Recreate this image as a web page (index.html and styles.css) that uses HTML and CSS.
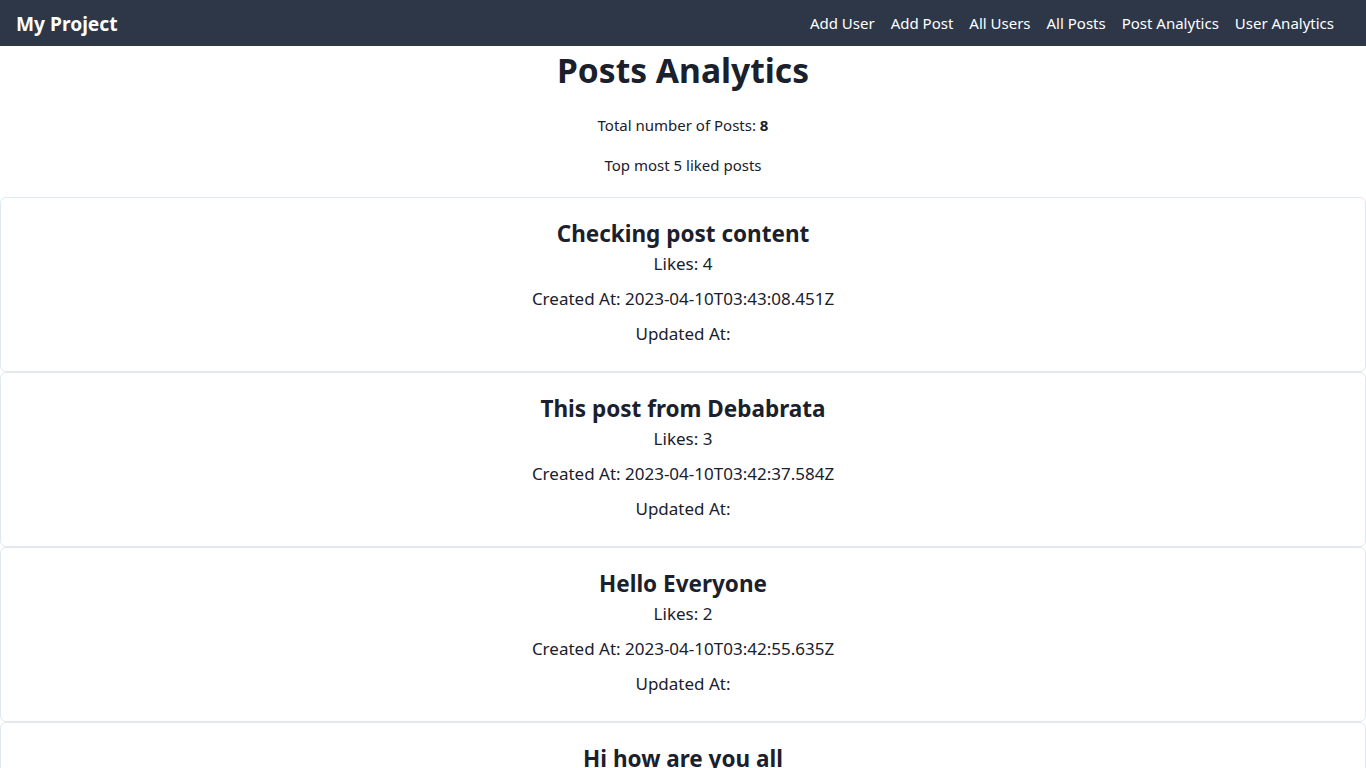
FILE: index.html
```html
<!DOCTYPE html>
<html lang="en">
<head>
<meta charset="utf-8">
<title>Posts Analytics</title>
<link rel="stylesheet" href="styles.css">
</head>
<body>
<nav class="navbar">
  <a class="brand" href="#">My Project</a>
  <ul class="nav-links">
    <li><a href="#">Add User</a></li>
    <li><a href="#">Add Post</a></li>
    <li><a href="#">All Users</a></li>
    <li><a href="#">All Posts</a></li>
    <li><a href="#">Post Analytics</a></li>
    <li><a href="#">User Analytics</a></li>
  </ul>
</nav>
<main class="content">
  <h1 class="page-title">Posts Analytics</h1>
  <p class="total">Total number of Posts: <strong>8</strong></p>
  <p class="subtitle">Top most 5 liked posts</p>
  <div class="cards">
    <div class="card">
      <h2 class="card-title">Checking post content</h2>
      <p>Likes: 4</p>
      <p>Created At: 2023-04-10T03:43:08.451Z</p>
      <p>Updated At:</p>
    </div>
    <div class="card">
      <h2 class="card-title">This post from Debabrata</h2>
      <p>Likes: 3</p>
      <p>Created At: 2023-04-10T03:42:37.584Z</p>
      <p>Updated At:</p>
    </div>
    <div class="card">
      <h2 class="card-title">Hello Everyone</h2>
      <p>Likes: 2</p>
      <p>Created At: 2023-04-10T03:42:55.635Z</p>
      <p>Updated At:</p>
    </div>
    <div class="card">
      <h2 class="card-title">Hi how are you all</h2>
      <p>Likes: 1</p>
      <p>Created At: 2023-04-10T03:42:20.112Z</p>
      <p>Updated At:</p>
    </div>
    <div class="card">
      <h2 class="card-title">Another post</h2>
      <p>Likes: 0</p>
      <p>Created At: 2023-04-10T03:41:10.000Z</p>
      <p>Updated At:</p>
    </div>
  </div>
</main>
</body>
</html>
```
FILE: styles.css
```css
* { box-sizing: border-box; }
html, body { margin: 0; padding: 0; }
body {
  font-family: "Noto Sans", "Open Sans", sans-serif;
  color: #1a202c;
  background: #ffffff;
}
.navbar {
  height: 46px;
  background: #2d3748;
  display: flex;
  align-items: center;
  justify-content: space-between;
  padding: 0 32px 0 16px;
}
.brand {
  color: #ffffff;
  font-weight: 700;
  font-size: 19.2px;
  text-decoration: none;
}
.nav-links {
  list-style: none;
  margin: 0;
  padding: 0;
  display: flex;
  gap: 16px;
}
.nav-links a {
  color: #ffffff;
  text-decoration: none;
  font-size: 15px;
}
.content { text-align: center; }
.page-title {
  font-size: 33.6px;
  line-height: 40px;
  font-weight: 700;
  margin: 4px 0 0;
}
.total {
  font-size: 15px;
  line-height: 24px;
  margin: 23px 0 16px;
}
.subtitle {
  font-size: 15px;
  line-height: 24px;
  margin: 0 0 20px;
}
.card {
  border: 1px solid #e2e8f0;
  border-radius: 6px;
  padding: 20px 16px 16px;
}
.card-title {
  font-size: 22.5px;
  line-height: 32px;
  font-weight: 700;
  margin: 0;
}
.card p {
  font-size: 17px;
  line-height: 27px;
  margin: 0 0 8px;
}
```
